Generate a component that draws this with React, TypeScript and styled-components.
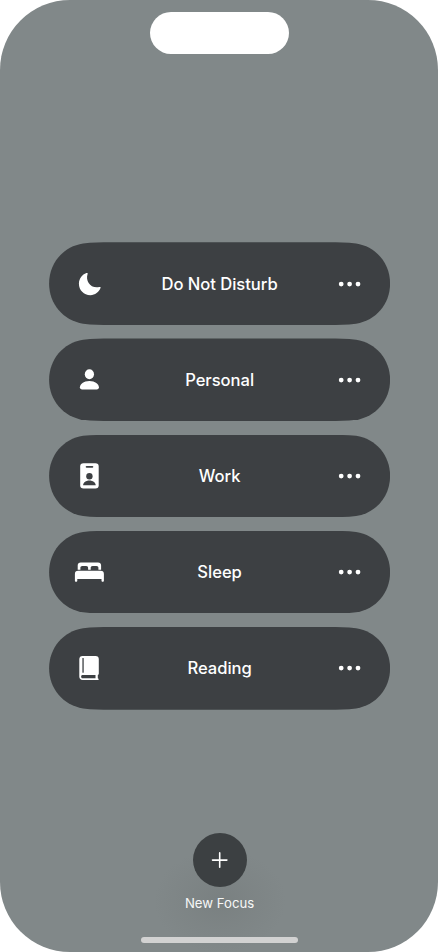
import React from "react";
import styled, { createGlobalStyle } from "styled-components";

const GlobalStyle = createGlobalStyle`
  html, body { margin: 0; padding: 0; background: #fff; }
  * { box-sizing: border-box; }
  button { font: inherit; color: inherit; border: 0; padding: 0; background: none; }
`;

const Screen = styled.main`
  width: 438.4px;
  height: 952px;
  padding-left: 0.8px;
  border-radius: 70px;
  background: #818889;
  color: #fff;
  font-family: Inter, "Liberation Sans", sans-serif;
  display: flex;
  flex-direction: column;
  align-items: center;
  overflow: hidden;
`;

const Island = styled.div`
  width: 139px;
  height: 41.6px;
  margin-top: 12.2px;
  flex: none;
  border-radius: 21px;
  background: #fff;
`;

const ModeList = styled.div`
  margin-top: 188.5px;
  display: flex;
  flex-direction: column;
  gap: 13.6px;
`;

const ModeRow = styled.div`
  width: 341px;
  height: 82.6px;
  padding: 0 25px;
  display: grid;
  grid-template-columns: 31px 1fr 31px;
  align-items: center;
  background: #3d4043;
  clip-path: path("M0 41.3C0 21 14 4.2 34 1.2C43 0 52 0 62 0H279C289 0 298 0 307 1.2C327 4.2 341 21 341 41.3C341 61.6 327 78.4 307 81.4C298 82.6 289 82.6 279 82.6H62C52 82.6 43 82.6 34 81.4C14 78.4 0 61.6 0 41.3Z");
`;

const ModeName = styled.span`
  text-align: center;
  font-size: 16.6px;
  line-height: 24px;
  font-weight: 500;
  letter-spacing: -0.04px;
`;

const Glyph = styled.svg`
  display: block;
  width: 30px;
  height: 30px;
  fill: #fff;
`;

const MoreButton = styled.button`
  display: flex;
  justify-content: center;
`;

const NewFocus = styled.div`
  width: 190px;
  height: 119px;
  margin-top: 123.2px;
  display: flex;
  flex-direction: column;
  align-items: center;
  background: radial-gradient(ellipse 66px 52px at 50% 68px, rgba(108, 114, 114, 0.36), rgba(112, 118, 118, 0.2) 50%, rgba(125, 132, 132, 0));
`;

const AddButton = styled.button`
  width: 54px;
  height: 54px;
  flex: none;
  border-radius: 50%;
  background: #3c4042;
  display: grid;
  place-items: center;
`;

const AddLabel = styled.span`
  margin-top: 6.6px;
  font-size: 13.2px;
  line-height: 20px;
  color: #f6f7f7;
`;

const HomeIndicator = styled.div`
  width: 156.5px;
  height: 6px;
  margin-top: 23.4px;
  border-radius: 3px;
  background: #d2d2d2;
`;

const Moon = () => (
  <Glyph viewBox="0 0 30 30">
    <path d="M11.9 4.2C12.8 3.8 13.5 4.2 13.1 5.1C10.7 12.1 16.1 20 24.7 18.2C25.8 17.9 26.4 18.2 26 19.2C24.5 23.2 20.5 26.3 15.9 26.3C9.4 26.3 4.4 21.3 4.4 14.9C4.4 9.9 7.7 5.7 11.9 4.2Z" transform="translate(.5 -.1)" />
  </Glyph>
);

const Person = () => (
  <Glyph viewBox="0 0 30 30">
    <ellipse cx="15.4" cy="9.3" rx="4.6" ry="5" />
    <path d="M8.1 24.4C6.7 24.4 5.9 23.6 5.9 22.3C5.9 19.6 9.6 16.1 15.4 16.1S24.9 19.6 24.9 22.3C24.9 23.6 24.1 24.4 22.7 24.4Z" />
  </Glyph>
);

const Badge = () => (
  <Glyph viewBox="0 0 30 30">
    <rect x="6.2" y="2.2" width="18.5" height="25.3" rx="3.3" />
    <g fill="#3d4043">
      <rect x="11.7" y="4.9" width="7.6" height="1.8" rx=".9" />
      <circle cx="15.4" cy="15.2" r="3.2" />
      <path d="M9.1 24.2C9.1 21.7 11.8 19.5 15.4 19.5S21.7 21.7 21.7 24.2Z" />
    </g>
  </Glyph>
);

const Bed = () => (
  <Glyph viewBox="0 0 30 30">
    <path d="M3.7 12.7V8.5C3.7 6.5 4.8 5.5 6.8 5.5H24C26 5.5 27.1 6.5 27.1 8.5V12.7H24.4V10.8C24.4 9.6 23.7 8.9 22.5 8.9H18.6C17.4 8.9 16.7 9.6 16.7 10.8V12.7H14.1V10.8C14.1 9.6 13.4 8.9 12.2 8.9H8.3C7.1 8.9 6.4 9.6 6.4 10.8V12.7Z" />
    <path d="M4.2 13.8H26.6C28.8 13.8 29.9 14.9 29.9 17V23.4C29.9 24.3 29.5 24.8 28.7 24.8S27.5 24.3 27.5 23.4V22.1H3.3V23.4C3.3 24.3 2.9 24.8 2.1 24.8S.9 24.3 .9 23.4V17C.9 14.9 2 13.8 4.2 13.8Z" />
  </Glyph>
);

const Book = () => (
  <Glyph viewBox="0 0 30 30">
    <path d="M8.6 3H21.6C23.7 3 24.8 4.1 24.8 6.1V20.4C24.8 21.2 24.4 21.6 23.8 21.9V25.2C24.4 25.4 24.7 25.8 24.7 26.2C24.7 26.8 24.3 27.1 23.6 27.1H8.8C6.6 27.1 5.3 25.7 5.3 23.6V6.3C5.3 4.2 6.5 3 8.6 3Z" />
    <g fill="#3d4043">
      <rect x="8.4" y="5" width="1.3" height="14.8" rx=".5" />
      <path d="M8.6 22.1H21.5V25.2H8.6C7.7 25.2 7.1 24.6 7.1 23.7S7.7 22.1 8.6 22.1Z" />
    </g>
  </Glyph>
);

const Ellipsis = () => (
  <Glyph viewBox="0 0 30 30">
    <circle cx="6.2" cy="15.1" r="2.4" />
    <circle cx="14.6" cy="15.1" r="2.4" />
    <circle cx="23" cy="15.1" r="2.4" />
  </Glyph>
);

const modes = [
  { name: "Do Not Disturb", Icon: Moon },
  { name: "Personal", Icon: Person },
  { name: "Work", Icon: Badge },
  { name: "Sleep", Icon: Bed },
  { name: "Reading", Icon: Book },
];

export default function App() {
  return (
    <>
      <GlobalStyle />
      <Screen>
        <Island />
        <ModeList>
          {modes.map(({ name, Icon }) => (
            <ModeRow key={name}>
              <Icon />
              <ModeName>{name}</ModeName>
              <MoreButton aria-label={`${name} options`}>
                <Ellipsis />
              </MoreButton>
            </ModeRow>
          ))}
        </ModeList>
        <NewFocus>
          <AddButton aria-label="New Focus">
            <svg width="18" height="18" viewBox="0 0 18 18" fill="none" stroke="#fff" strokeWidth="1.6" strokeLinecap="round">
              <path d="M8.7 1.9V16.3M1.5 9.1H15.9" />
            </svg>
          </AddButton>
          <AddLabel>New Focus</AddLabel>
          <HomeIndicator />
        </NewFocus>
      </Screen>
    </>
  );
}
